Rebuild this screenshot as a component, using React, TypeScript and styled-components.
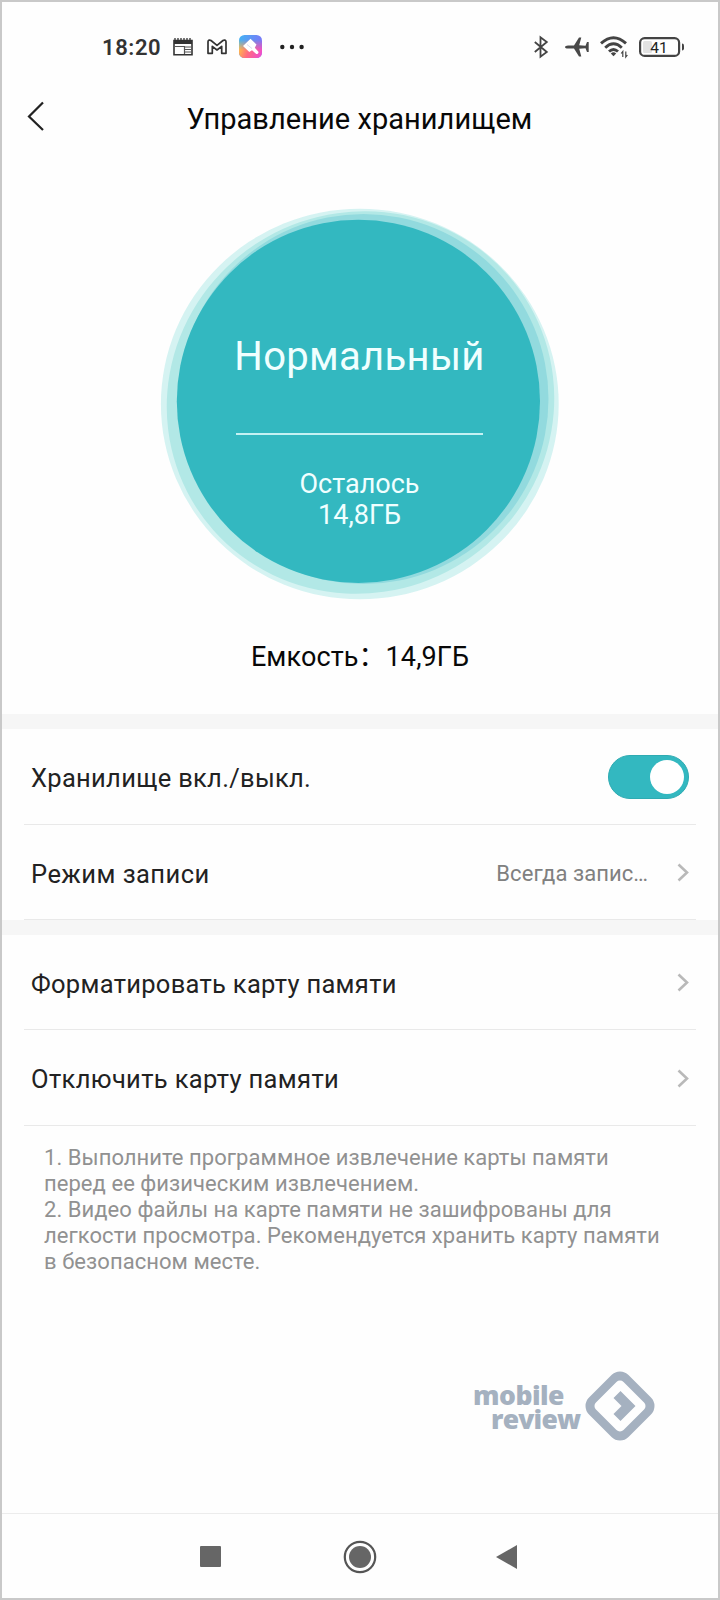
import React from "react";
import styled, { createGlobalStyle } from "styled-components";

const teal = "#33b8c0";

const GlobalStyle = createGlobalStyle`
  * { box-sizing: border-box; }
  body { margin: 0; background: #fff; font-family: Roboto, "Noto Sans CJK SC", sans-serif; }
`;

const Screen = styled.main`
  display: flex;
  flex-direction: column;
  width: 720px;
  height: 1600px;
  background: #fefefe;
  border: 2px solid #c9c9c9;
  overflow: hidden;
`;

const StatusBar = styled.header`
  display: flex;
  justify-content: space-between;
  align-items: center;
  height: 88px;
  padding: 1px 33px 0 100px;
  flex: none;
`;

const StatusGroup = styled.div`
  display: flex;
  align-items: center;
`;

const Clock = styled.span`
  width: 71px;
  padding-top: 2px;
  font-size: 22px;
  font-weight: 600;
  letter-spacing: 0.6px;
  line-height: 26px;
  color: #333;
`;

const TitleBar = styled.div`
  position: relative;
  display: flex;
  align-items: center;
  justify-content: center;
  height: 56px;
  flex: none;
`;

const BackButton = styled.button`
  position: absolute;
  left: 23px;
  top: 11px;
  width: 20px;
  height: 30px;
  padding: 0;
  border: 0;
  background: none;
`;

const Title = styled.h1`
  margin: 0;
  padding: 2px 1px 0 0;
  font-size: 29px;
  font-weight: 400;
  line-height: 56px;
  letter-spacing: 0.05px;
  color: #080808;
`;

const Summary = styled.section`
  display: flex;
  flex-direction: column;
  align-items: center;
  height: 568px;
  flex: none;
  padding-top: 58px;
`;

const Gauge = styled.div`
  position: relative;
  width: 404px;
  height: 400px;
`;

const Rings = styled.svg`
  position: absolute;
  inset: 0;
`;

const GaugeContent = styled.div`
  position: relative;
  display: flex;
  flex-direction: column;
  align-items: center;
  padding: 129px 1px 0 0;
  color: #f0ffff;
`;

const GaugeState = styled.div`
  font-size: 40px;
  line-height: 48px;
  letter-spacing: 0.3px;
`;

const GaugeLine = styled.hr`
  width: 247px;
  height: 2px;
  margin: 52px 0 34px;
  border: 0;
  background: #c5f1f3;
`;

const GaugeLeft = styled.div`
  font-size: 27px;
  line-height: 31px;
  text-align: center;
`;

const Capacity = styled.div`
  margin-top: 35px;
  font-size: 27px;
  line-height: 36px;
  letter-spacing: 0.1px;
  color: #080808;
`;

const Band = styled.div<{ $h: number }>`
  height: ${(p) => p.$h}px;
  flex: none;
  background: #f6f6f6;
`;

const Row = styled.div<{ $h: number }>`
  display: flex;
  align-items: center;
  height: ${(p) => p.$h}px;
  flex: none;
  margin: 0 22px;
  padding: 0 7px 0 7px;
  border-bottom: 1px solid #e9e9e9;
`;

const RowLabel = styled.span<{ $track?: number }>`
  flex: 1;
  font-size: 25.5px;
  line-height: 34px;
  letter-spacing: ${(p) => p.$track ?? 0.3}px;
  padding-top: 3px;
  color: #222;
`;

const RowValue = styled.span`
  margin-right: 29px;
  padding-top: 3px;
  font-size: 22px;
  line-height: 30px;
  letter-spacing: 0.05px;
  color: #808080;
`;

const Toggle = styled.button`
  display: flex;
  align-items: center;
  justify-content: flex-end;
  width: 81px;
  height: 44px;
  padding: 0 4.5px;
  border: 1px solid #2eabb2;
  border-radius: 22px;
  background: ${teal};
`;

const Knob = styled.span`
  width: 34px;
  height: 34px;
  border-radius: 50%;
  background: #fff;
`;

const Notes = styled.div`
  height: 240px;
  flex: none;
  padding: 19px 42px 0;
  font-size: 22px;
  line-height: 26px;
  letter-spacing: 0.05px;
  color: #919191;
`;

const Brand = styled.div`
  display: flex;
  align-items: center;
  justify-content: flex-end;
  height: 80px;
  padding-right: 63px;
  flex: none;
`;

const BrandName = styled.div`
  display: flex;
  flex-direction: column;
  width: 107px;
  margin-right: 5px;
  padding-top: 2px;
  font-family: "Open Sans", sans-serif;
  font-size: 26.5px;
  font-weight: 800;
  line-height: 24px;
  color: #a5b1c0;
`;

const BrandLine = styled.span<{ $indent: number; $track: number }>`
  padding-left: ${(p) => p.$indent}px;
  letter-spacing: ${(p) => p.$track}px;
`;

const NavBar = styled.nav`
  display: flex;
  align-items: center;
  height: 85px;
  margin-top: auto;
  flex: none;
  padding: 1px 0 0 198px;
  border-top: 1px solid #ececec;
`;

const NavIcon = styled.svg<{ $gap?: number }>`
  margin-left: ${(p) => p.$gap ?? 0}px;
  flex: none;
`;

const Icon = styled.svg<{ $gap?: number }>`
  margin-left: ${(p) => p.$gap ?? 0}px;
  flex: none;
  overflow: visible;
`;

const Chevron = () => (
  <Icon width="12" height="18" viewBox="0 0 12 18" fill="none" stroke="#b9b9b9" strokeWidth="2.6">
    <path d="M1.5 1.500 10 9.500 1.5 17.500" />
  </Icon>
);

const NewsIcon = () => (
  <Icon width="20" height="18" viewBox="0 0 20 18">
    <path d="M1 2.5h18v14.2H1z" fill="none" stroke="#333" strokeWidth="1.6" />
    <path d="M1 2h18v4H1z" fill="#333" />
    <path d="M2 0v3M5 0v3M8 0v3M11 0v3M14 0v3M17 0v3" stroke="#333" strokeWidth="1.3" />
    <path d="M2 8.5h9.5V16M12 9h6M12 11.5h6M12 14h6" fill="none" stroke="#555" strokeWidth="1.2" />
  </Icon>
);

const MailIcon = () => (
  <Icon $gap={14} width="20" height="16" viewBox="0 0 20 16" fill="none" stroke="#333" strokeWidth="1.7" strokeLinejoin="round">
    <path d="M1 14.300V2.800C1 1 2.800.6 4 1.500l6 4.800 6-4.800c1.200-.9 3-.5 3 1.300v11.500h-4.300V7.300L10 11 5.300 7.300v7z" />
  </Icon>
);

const ThemeIcon = () => (
  <Icon $gap={12} width="23" height="23" viewBox="0 0 23 23">
    <defs>
      <linearGradient id="sky" x1="0" y1="0" x2="1" y2="0.25">
        <stop offset="0" stopColor="#42b4f3" />
        <stop offset="1" stopColor="#7a78f8" />
      </linearGradient>
      <linearGradient id="warm" x1="0" y1="0.3" x2="1" y2="0.7">
        <stop offset="0" stopColor="#ffcf3a" />
        <stop offset="0.5" stopColor="#ff6a80" />
        <stop offset="1" stopColor="#f04fc8" />
      </linearGradient>
      <linearGradient id="fade" x1="0" y1="0" x2="0" y2="1">
        <stop offset="0.2" stopColor="#fff" stopOpacity="0" />
        <stop offset="0.65" stopColor="#fff" />
      </linearGradient>
      <mask id="lower"><rect width="23" height="23" fill="url(#fade)" /></mask>
    </defs>
    <rect width="23" height="23" rx="5.500" fill="url(#sky)" />
    <rect width="23" height="23" rx="5.500" fill="url(#warm)" mask="url(#lower)" />
    <path d="M4 11 11.500 3.800 17.500 9.500 15.800 12.800 19 16.300a1.500 1.500 0 0 1-2.300 2.200L13 15.200 10.300 17z" fill="#fff" />
    <path d="M8 9.500 13 13.500" stroke="#d8dcf0" strokeWidth="1" />
  </Icon>
);

const DotsIcon = () => (
  <Icon $gap={18} width="24" height="6" viewBox="0 0 24 6" fill="#222">
    <circle cx="2.300" cy="3" r="2.200" />
    <circle cx="12" cy="3" r="2.200" />
    <circle cx="21.600" cy="3" r="2.200" />
  </Icon>
);

const BluetoothIcon = () => (
  <Icon width="14" height="22" viewBox="0 0 14 22" fill="none" stroke="#444" strokeWidth="1.800">
    <path d="M.8 6 12.800 16 6.500 20.800V1.200L12.800 6 .8 16" />
  </Icon>
);

const PlaneIcon = () => (
  <Icon $gap={17} width="24" height="20" viewBox="0 0 24 20" fill="#484848">
    <path d="M0 10C0 9 1.500 8.500 3 8.400h6L14 .5h2.300L14.200 8.300l6.300.5 1.500-3.800h1.700v10H22l-1.500-3.800-6.300.5 2.100 7.800H14L9 11.600H3C1.500 11.500 0 11 0 10z" />
  </Icon>
);

const WifiIcon = () => (
  <Icon $gap={11} width="28" height="22" viewBox="0 0 28 22" fill="none" stroke="#444" strokeWidth="2.900">
    <path d="M1 7.300Q13.500-4 26 7.300M5.200 11.700Q13.500 4 21.800 11.700M9 15.500Q13.500 11.300 18 15.500" />
    <path d="M10.800 17.600Q13.500 15 16.200 17.600L13.500 20.300z" fill="#444" stroke="none" />
    <path d="M22.800 21v-5.500l-1.600 2M25.800 15.500V21l1.600-2" strokeWidth="1.200" />
  </Icon>
);

const BatteryIcon = () => (
  <Icon $gap={11} width="46" height="20" viewBox="0 0 46 20">
    <rect x="1.100" y="1.100" width="39" height="17.800" rx="4.500" fill="#fff" stroke="#444" strokeWidth="2.200" />
    <rect x="4" y="4" width="9" height="12" rx="1.500" fill="#e2e2e2" />
    <path d="M43 6.500q2 0 2 2v3q0 2-2 2z" fill="#444" />
    <text x="20" y="15.500" textAnchor="middle" fontFamily="Roboto" fontSize="15.500" fill="#222">41</text>
  </Icon>
);

export default function App() {
  return (
    <>
      <GlobalStyle />
      <Screen>
        <StatusBar>
          <StatusGroup>
            <Clock>18:20</Clock>
            <NewsIcon />
            <MailIcon />
            <ThemeIcon />
            <DotsIcon />
          </StatusGroup>
          <StatusGroup>
            <BluetoothIcon />
            <PlaneIcon />
            <WifiIcon />
            <BatteryIcon />
          </StatusGroup>
        </StatusBar>
        <TitleBar>
          <BackButton aria-label="Назад">
            <svg width="20" height="30" viewBox="0 0 20 30" fill="none" stroke="#222" strokeWidth="2.200">
              <path d="M18 1.500 4 15.500 18 29" />
            </svg>
          </BackButton>
          <Title>Управление хранилищем</Title>
        </TitleBar>
        <Summary>
          <Gauge>
            <Rings width="404" height="400" viewBox="158 204 404 400">
              <ellipse cx="359.800" cy="404" rx="198.900" ry="195.300" fill="#d5f3f2" />
              <ellipse cx="360.500" cy="402.500" rx="195" ry="190" transform="rotate(-30 360.500 402.500)" fill="#b2e8e6" />
              <circle cx="363.500" cy="399" r="185" fill="#92dade" />
              <circle cx="358.400" cy="401.300" r="181.600" fill={teal} />
            </Rings>
            <GaugeContent>
              <GaugeState>Нормальный</GaugeState>
              <GaugeLine />
              <GaugeLeft>
                Осталось
                <br />
                14,8ГБ
              </GaugeLeft>
            </GaugeContent>
          </Gauge>
          <Capacity>Емкость：14,9ГБ</Capacity>
        </Summary>
        <Band $h={15} />
        <Row $h={96}>
          <RowLabel>Хранилище вкл./выкл.</RowLabel>
          <Toggle role="switch" aria-checked="true">
            <Knob />
          </Toggle>
        </Row>
        <Row $h={95}>
          <RowLabel $track={0.45}>Режим записи</RowLabel>
          <RowValue>Всегда запис…</RowValue>
          <Chevron />
        </Row>
        <Band $h={15} />
        <Row $h={95}>
          <RowLabel>Форматировать карту памяти</RowLabel>
          <Chevron />
        </Row>
        <Row $h={96}>
          <RowLabel $track={0.35}>Отключить карту памяти</RowLabel>
          <Chevron />
        </Row>
        <Notes>
          1. Выполните программное извлечение карты памяти
          <br />
          перед ее физическим извлечением.
          <br />
          2. Видео файлы на карте памяти не зашифрованы для
          <br />
          легкости просмотра. Рекомендуется хранить карту памяти
          <br />в безопасном месте.
        </Notes>
        <Brand>
          <BrandName>
            <BrandLine $indent={0} $track={-0.5}>mobile</BrandLine>
            <BrandLine $indent={18} $track={-0.8}>review</BrandLine>
          </BrandName>
          <svg width="70" height="70" viewBox="0 0 70 70">
            <rect x="7.100" y="7.100" width="55.800" height="55.800" rx="12" transform="rotate(45 35 35)" fill="#a5b1c0" />
            <rect x="15.500" y="15.500" width="39" height="39" rx="5" transform="rotate(45 35 35)" fill="#fefefe" />
            <path d="M35.500 20 50.500 35 35.500 50 28.500 43 36.500 35 28.500 27z" fill="#a5b1c0" />
          </svg>
        </Brand>
        <NavBar>
          <NavIcon width="21" height="21" viewBox="0 0 21 21">
            <rect width="21" height="21" rx="1" fill="#666" />
          </NavIcon>
          <NavIcon $gap={122} width="34" height="34" viewBox="0 0 34 34">
            <circle cx="17" cy="17" r="15.200" fill="none" stroke="#555" strokeWidth="2.200" />
            <circle cx="17" cy="17" r="11" fill="#666" />
          </NavIcon>
          <NavIcon $gap={119} width="22" height="24" viewBox="0 0 22 24">
            <path d="M0 12 21 0v24z" fill="#666" />
          </NavIcon>
        </NavBar>
      </Screen>
    </>
  );
}
